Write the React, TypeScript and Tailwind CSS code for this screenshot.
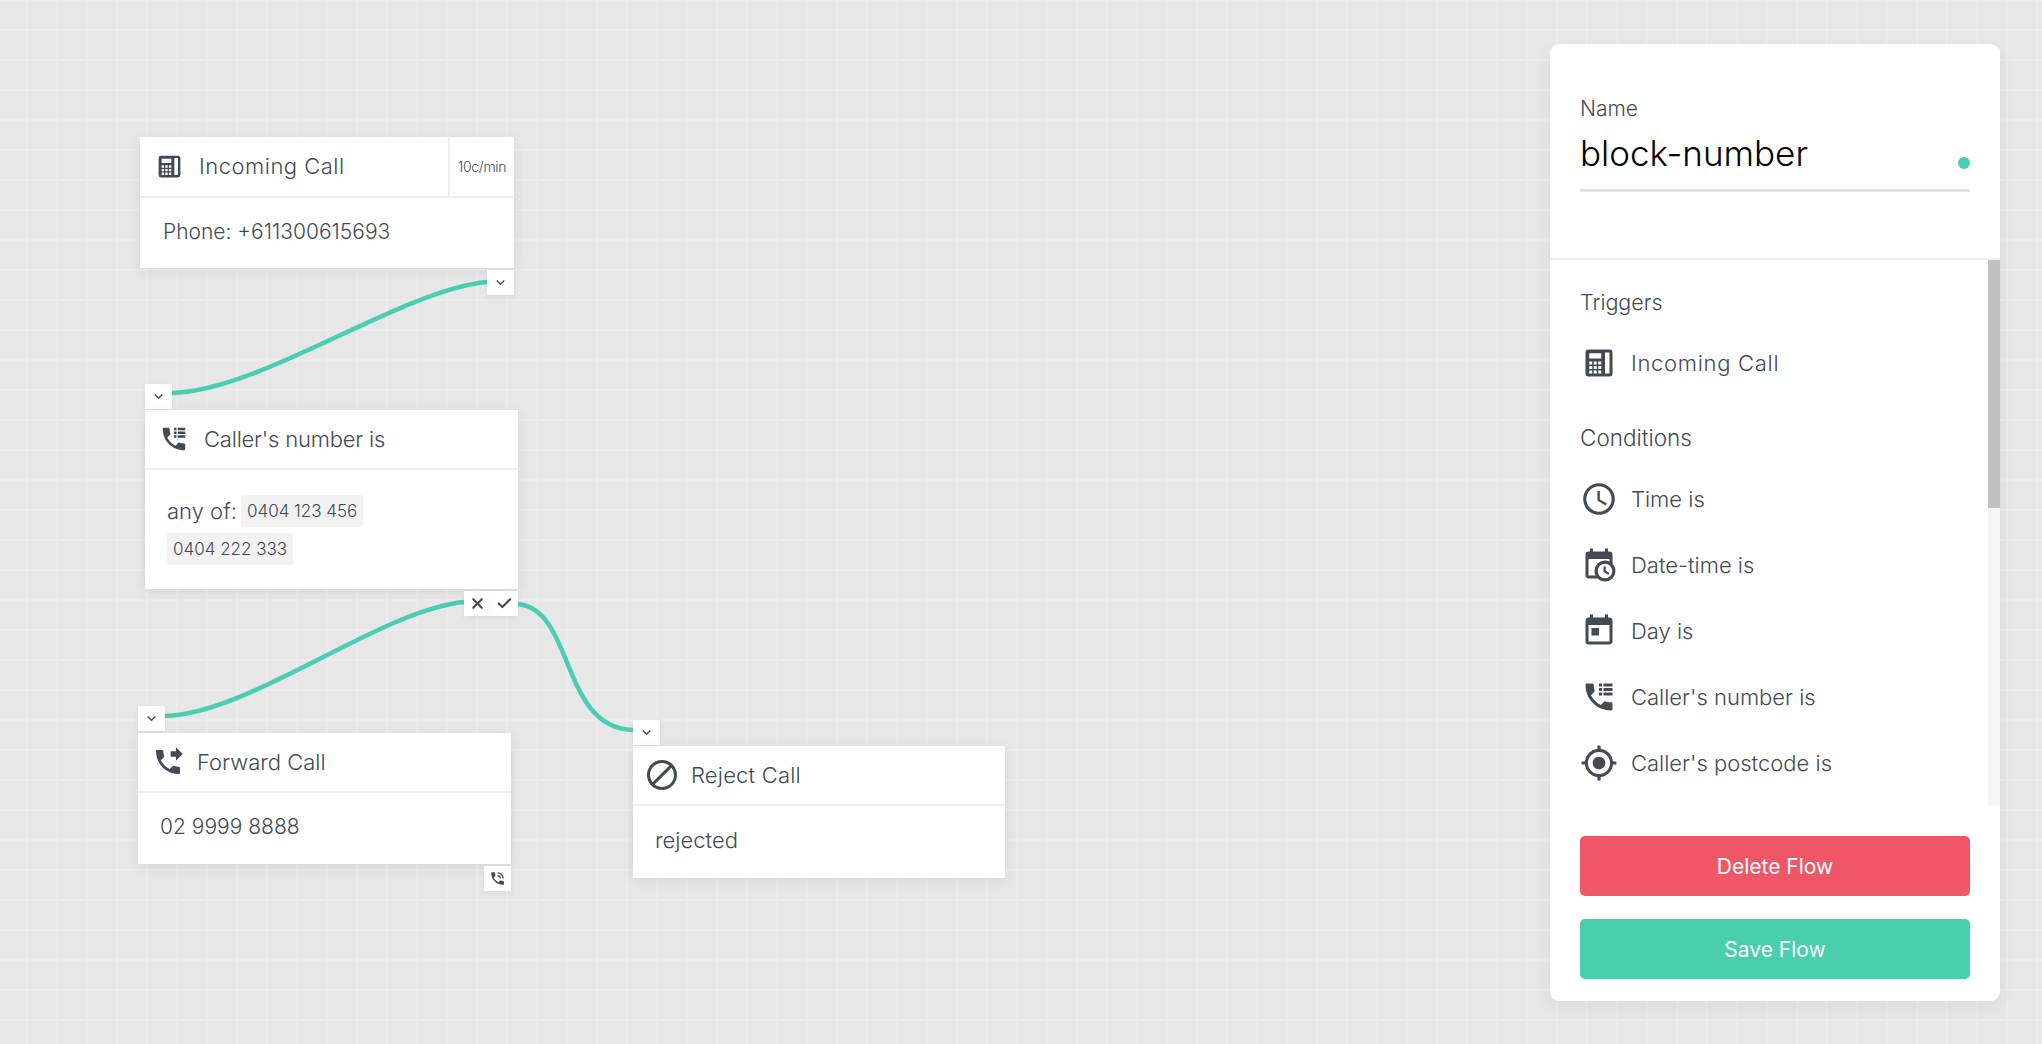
import React from 'react';
import { Check, X } from 'lucide-react';
import { MdAccessTime, MdBlock, MdExpandMore, MdGpsFixed, MdPhoneForwarded, MdPhoneInTalk, MdToday } from 'react-icons/md';

const PHONE = 'M6.62 10.79c1.44 2.83 3.76 5.14 6.59 6.59l2.2-2.2c.27-.27.67-.36 1.02-.24 1.12.37 2.33.57 3.57.57.55 0 1 .45 1 1V20c0 .55-.45 1-1 1-9.39 0-17-7.61-17-17 0-.55.45-1 1-1h3.5c.55 0 1 .45 1 1 0 1.25.2 2.45.57 3.57.11.35.03.74-.25 1.02l-2.2 2.2z';

type IconProps = { className?: string };

const DeskPhone = ({ className }: IconProps) => (
  <svg viewBox="0 0 24 24" fill="currentColor" className={className}>
    <path
      fillRule="evenodd"
      d="M5 3h14a2 2 0 0 1 2 2v14a2 2 0 0 1-2 2H5a2 2 0 0 1-2-2V5a2 2 0 0 1 2-2zm11 2v14h3V5h-3zM5.500 5.500v3.500h8V5.500h-8zM5.500 11v2h2v-2h-2zm3 0v2h2v-2h-2zm3 0v2h2v-2h-2zM5.500 14v2h2v-2h-2zm3 0v2h2v-2h-2zm3 0v2h2v-2h-2zM5.500 17v2h2v-2h-2zm3 0v2h2v-2h-2zm3 0v2h2v-2h-2z"
    />
  </svg>
);

const PhoneLog = ({ className }: IconProps) => (
  <svg viewBox="0 0 24 24" fill="currentColor" className={className}>
    <path d={PHONE} />
    <path d="M12 3h2v2h-2zM15 3h6v2h-6zM12 6h2v2h-2zM15 6h6v2h-6zM12 9h2v2h-2zM15 9h6v2h-6z" />
  </svg>
);

const CalendarClock = ({ className }: IconProps) => (
  <svg viewBox="0 0 24 24" fill="currentColor" className={className}>
    <path d="M15,13H16.5V15.82L18.94,17.23L18.19,18.53L15,16.69V13M19,8H5V19H9.67C9.24,18.09 9,17.07 9,16A7,7 0 0,1 16,9C17.07,9 18.09,9.24 19,9.67V8M5,21C3.89,21 3,20.1 3,19V5C3,3.89 3.89,3 5,3H6V1H8V3H16V1H18V3H19A2,2 0 0,1 21,5V11.1C22.24,12.36 23,14.09 23,16A7,7 0 0,1 16,23C14.09,23 12.36,22.24 11.1,21H5M16,11.15A4.85,4.85 0 0,0 11.15,16C11.15,18.68 13.32,20.85 16,20.85A4.85,4.85 0 0,0 20.85,16C20.85,13.32 18.68,11.15 16,11.15Z" />
  </svg>
);

const Port = ({ children, className = '' }: { children: React.ReactNode; className?: string }) => (
  <div className={`absolute flex h-[25px] w-[27px] items-center justify-center bg-white text-[#434a54] shadow-[0_2px_6px_rgba(0,0,0,0.06)] ${className}`}>
    {children}
  </div>
);

const Chevron = () => <MdExpandMore className="h-[17px] w-[17px]" />;

type NodeProps = {
  className: string;
  title: string;
  titleClass?: string;
  icon: React.ReactNode;
  head: string;
  headHeight?: string;
  price?: string;
  children: React.ReactNode;
};

const FlowNode = ({ className, title, titleClass = '', icon, head, headHeight = 'h-[60px]', price, children }: NodeProps) => (
  <div className={`absolute bg-white text-[#434a54] shadow-[0_3px_12px_rgba(0,0,0,0.08)] ${className}`}>
    <div className={`flex items-stretch border-b-2 border-[#eeeeee] ${headHeight}`}>
      <div className={`flex flex-1 items-center ${head}`}>
        {icon}
        <span className={`text-[22px] font-light ${titleClass}`}>{title}</span>
      </div>
      {price && (
        <div className="flex w-[66px] items-center justify-center border-l-2 border-[#eeeeee] text-[14px] font-light tracking-[-0.3px]">{price}</div>
      )}
    </div>
    {children}
  </div>
);

const Chip = ({ children }: { children: React.ReactNode }) => (
  <span className="inline-block h-8 rounded-[3px] bg-[#f2f2f2] px-[6px] text-[17px] leading-8 font-light">{children}</span>
);

const items = [
  { label: 'Time is', icon: <MdAccessTime className="h-[38px] w-[38px]" /> },
  { label: 'Date-time is', icon: <CalendarClock className="h-[36px] w-[36px]" /> },
  { label: 'Day is', icon: <MdToday className="h-[36px] w-[36px]" /> },
  { label: "Caller's number is", icon: <PhoneLog className="h-[36px] w-[36px]" /> },
  { label: "Caller's postcode is", icon: <MdGpsFixed className="h-[40px] w-[40px]" /> },
];

const PanelRow = ({ icon, label, labelClass = '' }: { icon: React.ReactNode; label: string; labelClass?: string }) => (
  <div className="flex h-[66px] items-center">
    <div className="flex w-[38px] items-center justify-center text-[#434a54]">{icon}</div>
    <span className={`ml-[13px] text-[22px] font-light text-[#434a54] ${labelClass}`}>{label}</span>
  </div>
);

export default function App() {
  return (
    <div className="relative flex h-screen justify-end overflow-hidden bg-[#e7e7e7] bg-[linear-gradient(to_right,#ececec_2px,transparent_2px),linear-gradient(to_bottom,#ececec_2px,transparent_2px)] bg-[length:30px_30px] bg-[position:26px_29px] pt-[44px] pr-[42px] pb-[43px] font-['Inter',sans-serif]">
      {/* links between the nodes */}
      <svg className="absolute top-0 left-0 h-full w-full" fill="none" stroke="#4acfae" strokeWidth="4.500">
        <path d="M487 282C400 290 260 392 171 393" />
        <path d="M464 602C380 610 250 714 165 716" />
        <path d="M518 604C575 610 560 728 633 730" />
      </svg>

      <FlowNode className="top-[137px] left-[140px] w-[374px]" title="Incoming Call" titleClass="tracking-[0.5px]" head="gap-[15px] pl-[15px]" headHeight="h-[61px]" price="10c/min" icon={<DeskPhone className="h-[29px] w-[29px]" />}>
        <div className="flex h-[70px] items-center pb-[3px] pl-[23px] text-[21px] font-light">Phone: +611300615693</div>
      </FlowNode>
      <Port className="top-[270px] left-[487px]"><Chevron /></Port>

      <Port className="top-[384px] left-[145px]"><Chevron /></Port>
      <FlowNode className="top-[410px] left-[145px] w-[373px]" title="Caller's number is" titleClass="tracking-[-0.2px]" head="gap-[15px] pl-[14px]" icon={<PhoneLog className="h-[30px] w-[30px]" />}>
        <div className="px-[22px] pt-[25px] pb-[24px] text-[22px] font-light">
          <div className="flex h-8 items-center gap-[4px]"><span>any of:</span><Chip>0404 123 456</Chip></div>
          <div className="mt-[6px] flex"><Chip>0404 222 333</Chip></div>
        </div>
      </FlowNode>
      <Port className="top-[591px] left-[464px]"><X className="h-[17px] w-[17px]" strokeWidth={3} /></Port>
      <Port className="top-[591px] left-[491px]"><Check className="h-[17px] w-[17px]" strokeWidth={3} /></Port>

      <Port className="top-[706px] left-[138px]"><Chevron /></Port>
      <FlowNode className="top-[733px] left-[138px] w-[373px]" title="Forward Call" head="gap-[13px] pl-[14px]" icon={<MdPhoneForwarded className="h-[32px] w-[32px]" />}>
        <div className="flex h-[71px] items-center pb-[4px] pl-[22px] text-[21px] font-light">02 9999 8888</div>
      </FlowNode>
      <Port className="top-[866px] left-[484px]"><MdPhoneInTalk className="h-[17px] w-[17px]" /></Port>

      <Port className="top-[720px] left-[633px]"><Chevron /></Port>
      <FlowNode className="top-[746px] left-[633px] w-[372px]" title="Reject Call" titleClass="tracking-[0.2px]" head="gap-[11px] pl-[11px]" icon={<MdBlock className="h-[36px] w-[36px]" />}>
        <div className="flex h-[72px] items-center pb-[4px] pl-[22px] text-[22px] font-light">rejected</div>
      </FlowNode>

      <aside className="relative flex h-[957px] w-[450px] flex-col overflow-hidden rounded-[9px] bg-white shadow-[0_6px_18px_rgba(0,0,0,0.06)]">
        <div className="h-[216px] shrink-0 border-b-2 border-[#eeeeee] px-[30px] pt-[53px]">
          <div className="text-[21px] leading-6 font-light text-[#434a54]">Name</div>
          <div className="relative mt-[12px] flex h-[59px] items-start border-b-[3px] border-[#e2e2e2]">
            <span className="text-[35px] leading-10 font-light text-black">block-number</span>
            <span className="absolute top-[24px] right-0 h-3 w-3 rounded-full bg-[#4acfae]" />
          </div>
        </div>

        <div className="relative h-[546px] shrink-0 overflow-hidden px-[30px] pt-[27px]">
          <div className="text-[21.500px] leading-[30px] font-light text-[#434a54]">Triggers</div>
          <div className="mt-[13px]">
            <PanelRow icon={<DeskPhone className="h-[36px] w-[36px]" />} label="Incoming Call" labelClass="tracking-[0.7px]" />
          </div>
          <div className="mt-[27px] text-[22.500px] leading-[30px] font-light text-[#434a54]">Conditions</div>
          <div className="mt-[13px]">
            {items.map(item => <PanelRow key={item.label} icon={item.icon} label={item.label} />)}
          </div>
          <div className="absolute top-0 right-0 h-full w-3 bg-[#f5f5f5]">
            <div className="h-[248px] bg-[#c1c1c1]" />
          </div>
        </div>

        <div className="flex flex-col gap-[23px] px-[30px] pt-[30px]">
          <button className="h-[60px] rounded-[5px] bg-[#ef5766] pt-[2px] text-[21px] font-normal text-white">Delete Flow</button>
          <button className="h-[60px] rounded-[5px] bg-[#4acfae] pt-[2px] text-[21px] font-normal text-white">Save Flow</button>
        </div>
      </aside>
    </div>
  );
}
